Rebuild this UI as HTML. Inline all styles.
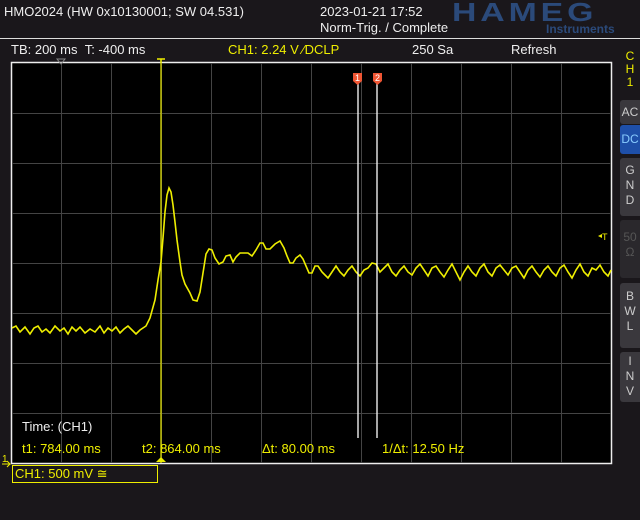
<!DOCTYPE html>
<html><head><style>
body{margin:0;background:#1a171b;width:640px;height:520px;overflow:hidden;font-family:"Liberation Sans",sans-serif;}
.t{position:absolute;white-space:nowrap;font-size:13px;}
.btn{position:absolute;left:620px;width:20px;background:#3a383d;border-radius:3px 0 0 3px;color:#ccc;font-size:12px;text-align:center;line-height:15px;}
</style></head><body>
<div class="t" style="left:4px;top:4px;color:#eee">HMO2024 (HW 0x10130001; SW 04.531)</div>
<div class="t" style="left:320px;top:4px;color:#eee">2023-01-21 17:52</div>
<div class="t" style="left:320px;top:20px;color:#eee">Norm-Trig. / Complete</div>
<div class="t" style="left:452px;top:-3px;color:#2b4a7a;font-size:26px;font-weight:bold;letter-spacing:3px;transform:scaleX(1.3);transform-origin:left">HAMEG</div>
<div class="t" style="left:546px;top:22px;color:#2b4a7a;font-size:12px;font-weight:bold">Instruments</div>
<div style="position:absolute;left:0;top:38px;width:640px;height:1px;background:#ddd"></div>
<div class="t" style="left:11px;top:42px;color:#eee">TB: 200 ms &nbsp;T: -400 ms</div>
<div class="t" style="left:228px;top:42px;color:#ee0">CH1: 2.24 V ⁄DCLP</div>
<div class="t" style="left:412px;top:42px;color:#eee">250 Sa</div>
<div class="t" style="left:511px;top:42px;color:#eee">Refresh</div>
<div class="t" style="left:624px;top:50px;color:#ee0;font-size:12px;line-height:13px;text-align:center;width:12px">C<br>H<br>1</div>
<div class="btn" style="top:100px;height:24px;line-height:24px">AC</div>
<div class="btn" style="top:125px;height:29px;line-height:29px;background:#1e4fa8;color:#8cf">DC</div>
<div class="btn" style="top:158px;height:58px;padding-top:5px;box-sizing:border-box">G<br>N<br>D</div>
<div class="btn" style="top:220px;height:58px;background:#2a282c;color:#555;padding-top:10px;box-sizing:border-box">50<br>Ω</div>
<div class="btn" style="top:283px;height:65px;padding-top:6px;box-sizing:border-box">B<br>W<br>L</div>
<div class="btn" style="top:352px;height:50px;padding-top:2px;box-sizing:border-box">I<br>N<br>V</div>
<svg style="position:absolute;left:0;top:0" width="640" height="520">
<rect x="11.5" y="62.5" width="600" height="401" fill="#000" stroke="#eee" stroke-width="1.5"/>
<g stroke="#444" stroke-width="1">
<path d="M61.5 63V463M111.5 63V463M161.5 63V463M211.5 63V463M261.5 63V463M311.5 63V463M361.5 63V463M411.5 63V463M461.5 63V463M511.5 63V463M561.5 63V463"/>
<path d="M12 113.5H611M12 163.5H611M12 213.5H611M12 263.5H611M12 313.5H611M12 363.5H611M12 413.5H611"/>
</g>
<polyline fill="none" stroke="#ee0" stroke-width="1.6" points="12,328 16,326 20,332 25,327 30,334 34,328 38,326 42,332 46,329 50,333 55,326 60,331 64,328 68,334 72,327 76,331 80,327 85,333 90,329 95,332 100,326 104,333 108,328 112,331 116,327 120,333 124,329 128,326 132,330 136,334 140,330 146,326 150,318 155,300 158,280 161,262 163,238 165,212 167,195 169,188 171,192 173,205 175,222 177,240 180,262 182,275 185,284 190,293 193,300 197,301 200,292 203,273 206,254 209,249 212,250 215,258 219,264 223,262 226,256 230,255 233,262 236,257 240,253 248,253 252,256 256,250 260,243 263,243 266,249 270,249 275,244 280,241 284,248 287,256 290,263 293,263 296,258 300,255 303,259 306,266 309,273 312,273 315,266 318,266 322,272 325,275 328,278 332,272 336,266 340,272 344,276 348,270 352,266 356,272 360,276 364,270 368,268 372,263 376,264 380,272 384,268 388,264 392,272 396,276 400,270 404,266 408,272 412,275 416,268 420,264 424,270 428,276 432,268 436,266 440,272 444,277 448,270 452,264 456,272 460,280 464,272 468,266 472,272 476,276 480,268 484,264 488,272 492,276 496,268 500,265 504,270 508,275 512,268 516,266 520,272 524,278 528,270 532,266 536,272 540,277 544,270 548,266 552,272 556,276 560,268 564,265 568,272 572,278 576,270 580,264 584,272 588,276 592,268 596,270 600,265 604,272 608,276 611,270"/>
<line x1="161" y1="63" x2="161" y2="463" stroke="#ee0" stroke-width="1.2"/>
<line x1="358" y1="84" x2="358" y2="438" stroke="#fff" stroke-width="1.3"/>
<line x1="377" y1="84" x2="377" y2="438" stroke="#fff" stroke-width="1.3"/>
<path d="M353 73h9v8l-4.5 4l-4.5-4z" fill="#e53"/><text x="355" y="81" font-size="9" fill="#fff" font-family="Liberation Sans">1</text>
<path d="M373 73h9v8l-4.5 4l-4.5-4z" fill="#e53"/><text x="375" y="81" font-size="9" fill="#fff" font-family="Liberation Sans">2</text>
<path d="M57 59h8l-4 5z" fill="none" stroke="#888"/>
<path d="M157 59h8M161 59v4" stroke="#ee0" stroke-width="1.5"/>
<path d="M156 462h10l-5-5z" fill="#ee0"/>
<path d="M598 236l4-2v4z" fill="#ee0"/><text x="602" y="240" font-size="9" fill="#ee0" font-family="Liberation Sans">T</text>
<text x="2" y="462" font-size="10" fill="#ee0" font-family="Liberation Sans">1</text>
<path d="M2 464h8l-3-3M10 464l-3 3" stroke="#ee0" fill="none"/>
<rect x="12.5" y="465.5" width="145" height="17" fill="none" stroke="#ee0"/>
</svg>
<div class="t" style="left:22px;top:447px;color:#eee;top:419px">Time: (CH1)</div>
<div class="t" style="left:22px;top:441px;color:#ee0">t1: 784.00 ms</div>
<div class="t" style="left:142px;top:441px;color:#ee0">t2: 864.00 ms</div>
<div class="t" style="left:262px;top:441px;color:#ee0">Δt: 80.00 ms</div>
<div class="t" style="left:382px;top:441px;color:#ee0">1/Δt: 12.50 Hz</div>
<div class="t" style="left:15px;top:466px;color:#ee0">CH1: 500 mV ≅</div>
</body></html>
